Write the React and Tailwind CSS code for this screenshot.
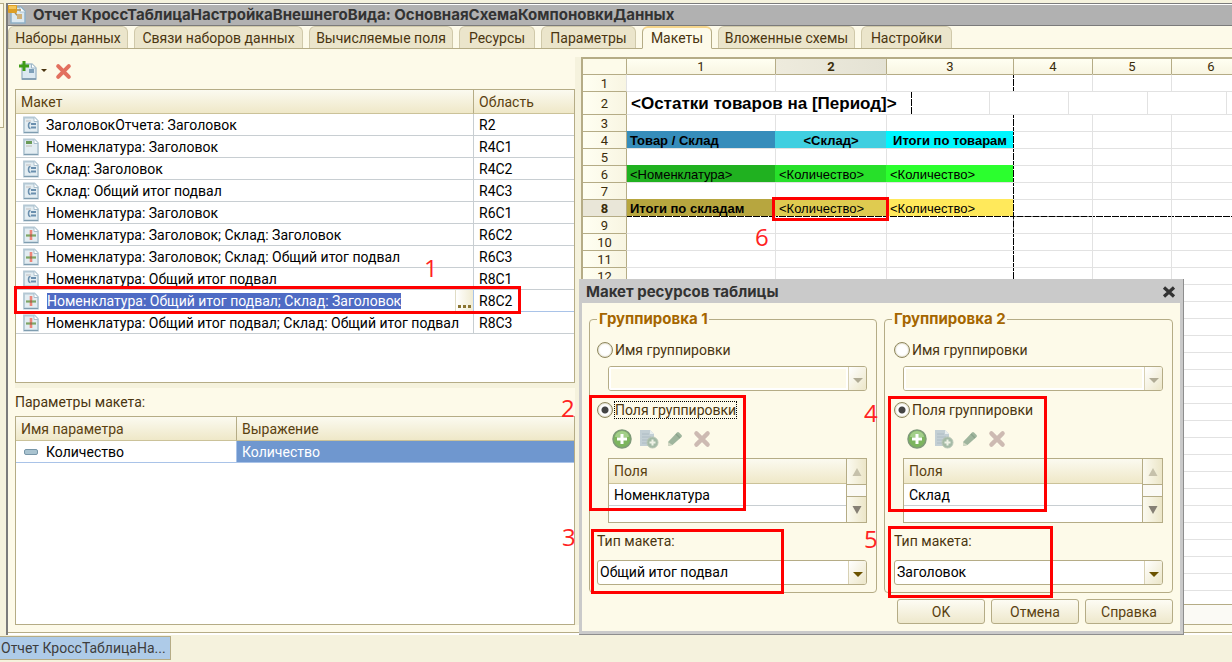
import React from 'react';
import { clsx } from 'clsx';

const tabs = [
  ['Наборы данных', 'w-[120px]'],
  ['Связи наборов данных', 'w-[169px]'],
  ['Вычисляемые поля', 'w-[144px]'],
  ['Ресурсы', 'w-[76px]'],
  ['Параметры', 'w-[95px]'],
  ['Макеты', 'w-[70px]'],
  ['Вложенные схемы', 'w-[137px]'],
  ['Настройки', 'w-[91px]'],
];

const layouts = [
  ['group', 'ЗаголовокОтчета: Заголовок', 'R2'],
  ['header', 'Номенклатура: Заголовок', 'R4C1'],
  ['group', 'Склад: Заголовок', 'R4C2'],
  ['group', 'Склад: Общий итог подвал', 'R4C3'],
  ['group', 'Номенклатура: Заголовок', 'R6C1'],
  ['cross', 'Номенклатура: Заголовок; Склад: Заголовок', 'R6C2'],
  ['cross', 'Номенклатура: Заголовок; Склад: Общий итог подвал', 'R6C3'],
  ['group', 'Номенклатура: Общий итог подвал', 'R8C1'],
  ['cross', 'Номенклатура: Общий итог подвал; Склад: Заголовок', 'R8C2', true],
  ['cross', 'Номенклатура: Общий итог подвал; Склад: Общий итог подвал', 'R8C3'],
];

const headBg = 'bg-linear-to-b from-[#fbfaf0] to-[#efe8c8]';

function PageIcon({ kind }) {
  return (
    <svg width="16" height="18" viewBox="0 0 16 18" className="block shrink-0" aria-hidden="true">
      <path d="M1 1.5h10.5L15 5v11.500H1z" fill="#e3edf2" stroke="#b4c8d4" strokeWidth="1.800" />
      <path d="M11 1.500V5.500h4" fill="#fff" stroke="#a9bfcd" />
      <path d="M1 16.500h14" stroke="#7f9db0" />
      {kind === 'group' && (
        <g fill="none" stroke="#6a8fae">
          <path d="M7.500 6.500q-2 0-2 3t2 3" strokeWidth="1.500" />
          <path d="M8 8h5M8 11.500h5" strokeWidth="2" />
          <path d="M3 5h5" stroke="#d3d6d8" strokeWidth="2" />
        </g>
      )}
      {kind === 'header' && (
        <g>
          <path d="M3 3h6v3H3z" fill="#6b9b58" />
          <path d="M3 8h6" stroke="#d0d4d2" strokeWidth="2" />
        </g>
      )}
      {kind === 'cross' && (
        <g>
          <path d="M8 4v10" stroke="#ee8478" strokeWidth="2.600" />
          <path d="M3 9.500h10" stroke="#7fa565" strokeWidth="2.200" />
          <path d="M7 8.500h2v2H7z" fill="#b5624e" />
        </g>
      )}
    </svg>
  );
}

function WindowIcon() {
  return (
    <svg width="20" height="20" viewBox="0 0 20 20" className="block shrink-0" aria-hidden="true">
      <path d="M3 2h10l4 4v12H3z" fill="#dbe8f0" stroke="#8fb0c6" strokeWidth="1.500" />
      <path d="M12 2v5h5" fill="#fff" stroke="#a9c2d2" />
      <path d="M7 8l4 4M8 5h5" stroke="#a58f62" strokeWidth="1.500" />
      <rect x="9" y="9" width="5" height="5" fill="#d0b27a" />
      <rect x="0" y="0" width="9" height="8" rx="1" fill="#dd9f25" />
      <path d="M1 1h7v3H1z" fill="#f3c65c" />
    </svg>
  );
}

function AddPageIcon() {
  return (
    <svg width="20" height="20" viewBox="0 0 20 20" className="block" aria-hidden="true">
      <path d="M3 3h10l4 4v11H3z" fill="#dce9f1" stroke="#a6bdcb" strokeWidth="1.500" />
      <path d="M12.500 3v4h4" fill="#fff" stroke="#9db6c6" />
      <path d="M3 18h14" stroke="#7795aa" strokeWidth="1.500" />
      <rect x="10" y="8" width="5" height="4" fill="#7ea0b9" />
      <path d="M5 0v10M0 5h10" stroke="#3f9c18" strokeWidth="3" />
    </svg>
  );
}

function CrossIcon({ color, size }) {
  return (
    <svg width={size} height={size} viewBox="0 0 16 16" className="block" aria-hidden="true">
      <path d="M3 3l10 10M13 3L3 13" stroke={color} strokeWidth="3.800" strokeLinecap="round" />
    </svg>
  );
}

function PlusCircle() {
  return (
    <svg width="20" height="20" viewBox="0 0 20 20" className="block" aria-hidden="true">
      <circle cx="10" cy="10" r="9" fill="#7cb55e" stroke="#7e9a78" strokeWidth="1.500" />
      <path d="M3 8a7 6 0 0 1 14 0z" fill="#a3cf8a" />
      <path d="M10 5v10M5 10h10" stroke="#fff" strokeWidth="3" />
    </svg>
  );
}

function CopyAddIcon() {
  return (
    <svg width="20" height="20" viewBox="0 0 20 20" className="block" aria-hidden="true">
      <path d="M1 1h10l4 4v12H1z" fill="#c3cfd4" />
      <path d="M11 1v4h4" fill="#e9eeee" />
      <path d="M3 5h7M3 8h9M3 11h6M3 14h5" stroke="#aebcc4" />
      <circle cx="13.500" cy="13.500" r="5.500" fill="#a5bba6" stroke="#b9c6b6" />
      <path d="M13.500 10.500v6M10.500 13.500h6" stroke="#eef2e6" strokeWidth="2" />
    </svg>
  );
}

function PencilIcon() {
  return (
    <svg width="18" height="18" viewBox="0 0 18 18" className="block" aria-hidden="true">
      <path d="M2 12L11 2.500q1-1 2 0l2.500 2.500q1 1 0 2L6.500 15 2 16z" fill="#9fb59d" />
      <path d="M2 12l4.500 3L2 16z" fill="#d3d8c4" />
      <path d="M10 4l4 4" stroke="#8ba38c" strokeWidth="1.500" />
    </svg>
  );
}

function Triangle({ up, color }) {
  return (
    <svg width="10" height="8" viewBox="0 0 10 8" className="block" aria-hidden="true">
      <path d={up ? 'M5 0l4.500 8h-9z' : 'M5 8L.5 0h9z'} fill={color} />
    </svg>
  );
}

function Combo({ id, labelledBy, value, disabled }) {
  return (
    <div className={clsx('flex h-[25px] overflow-hidden rounded-[3px] border border-[#b5ac86]', disabled ? 'bg-[#fdfae9]' : 'bg-white')}>
      <select
        id={id}
        aria-labelledby={labelledBy}
        disabled={disabled}
        className={clsx('min-w-0 flex-1 appearance-none px-[2px] pb-[2px] text-[14px] text-black opacity-100 outline-none', disabled && 'border-2 border-white')}
      >
        <option>{value}</option>
      </select>
      <span className="pointer-events-none flex w-[18px] items-center justify-center border-l border-[#d8d1b4] bg-linear-to-br from-white to-[#ece6c8] pt-[3px]">
        <svg width="10" height="5" viewBox="0 0 10 5" aria-hidden="true">
          <path d="M0 0h10L5 5z" fill={disabled ? '#b0ab95' : '#6b5200'} />
        </svg>
      </span>
    </div>
  );
}

function Group({ n, field, type, focused }) {
  const indent = n === 1 ? 'ml-[11px]' : 'ml-[9px]';
  const iconPad = n === 1 ? 'ml-[15px]' : 'ml-[13px]';
  return (
    <fieldset className={clsx('min-w-0 rounded-[4px] border border-[#b5ac86] pr-[9px] pb-[7px]', n === 1 ? 'w-[288px] pl-[7px]' : 'flex-1 pl-[9px]')}>
      <legend className={clsx("pr-[1px] pl-[2px] font-['Inter','Liberation_Sans',sans-serif] text-[15px] leading-[18px] font-bold text-[#a56600]", n === 2 && '-ml-[2px]')}>Группировка {n}</legend>
      <div className="mt-[13px] flex h-[18px] items-center gap-[2px]">
        <Radio id={`name-${n}`} group={`mode-${n}`} />
        <label id={`name-label-${n}`} htmlFor={`name-${n}`}>Имя группировки</label>
      </div>
      <div className={clsx('mt-[7px]', indent)}>
        <Combo labelledBy={`name-label-${n}`} value="" disabled />
      </div>
      <div className="mt-[10px] flex h-[18px] items-center gap-[1px]">
        <Radio id={`fields-${n}`} group={`mode-${n}`} checked />
        <label htmlFor={`fields-${n}`} className={clsx('border', focused ? 'border-dotted border-black' : 'border-transparent')}>Поля группировки</label>
      </div>
      <div className={clsx('mt-[10px] flex h-5 items-center gap-[7px]', iconPad)}>
        <button type="button"><PlusCircle /></button>
        <button type="button"><CopyAddIcon /></button>
        <button type="button"><PencilIcon /></button>
        <button type="button" className="ml-[2px]"><CrossIcon color="#cdbab2" size={18} /></button>
      </div>
      <div className={clsx('mt-[9px] flex h-[65px] border border-[#b5ac86] bg-white', indent)}>
        <div className="flex-1 overflow-hidden">
          <table className="w-full border-separate border-spacing-0">
            <thead>
              <tr>
                <th className={clsx('h-[25px] border-b border-[#cbc299] px-[5px] text-left font-normal text-[#5a4110]', headBg)}>Поля</th>
              </tr>
            </thead>
            <tbody>
              <tr>
                <td className="h-[22px] border-b border-[#c8ced2] px-[5px] text-black">{field}</td>
              </tr>
            </tbody>
          </table>
        </div>
        <div className="flex w-[20px] flex-col border-l border-[#b5ac86] bg-[#fbfaf5]">
          <button type="button" className="flex h-[26px] items-center justify-center border-b border-[#b5ac86] bg-linear-to-r from-[#fbfaf0] to-[#ece6c8]"><Triangle up color="#c6c1ab" /></button>
          <span className="flex-1" />
          <button type="button" className="flex h-[26px] items-center justify-center border-t border-[#b5ac86] bg-linear-to-r from-[#fbfaf0] to-[#ece6c8]"><Triangle color="#857f74" /></button>
        </div>
      </div>
      <label htmlFor={`type-${n}`} className="mt-[9px] block leading-[18px]">Тип макета:</label>
      <div className="mt-[10px]"><Combo id={`type-${n}`} value={type} /></div>
    </fieldset>
  );
}

function Radio({ id, group, checked }) {
  return (
    <input
      id={id}
      type="radio"
      name={group}
      defaultChecked={checked}
      className="m-0 size-4 shrink-0 appearance-none rounded-full border border-[#8f875c] bg-white shadow-[inset_0_0_2px_#b5ac86] checked:bg-[radial-gradient(circle,#444_3px,#fff_4px)]"
    />
  );
}

const vDash = '[background:linear-gradient(#000_7px,transparent_7px)_left/1px_8px_repeat-y]';
const hDash = '[background:linear-gradient(to_right,#000_7px,transparent_7px)_top/8px_1px_repeat-x]';
const bothDash = '[background:linear-gradient(to_right,#000_7px,transparent_7px)_top/8px_1px_repeat-x,linear-gradient(#000_7px,transparent_7px)_left/1px_8px_repeat-y]';
const lastLabelledRow = 12;
const sheetRows = Array.from({ length: 31 }, (_, i) => i + 1);

const filled = {
  4: [
    ['Товар / Склад', 'bg-[#368dbb] border-[#368dbb] font-bold'],
    ['<Склад>', 'bg-[#40cfe0] border-[#40cfe0] font-bold text-center'],
    ['Итоги по товарам', 'bg-[#00f6ff] border-[#00f6ff] font-bold text-center'],
  ],
  6: [
    ['<Номенклатура>', 'bg-[#20b120] border-[#20b120]'],
    ['<Количество>', 'bg-[#27e02a] border-[#27e02a]'],
    ['<Количество>', 'bg-[#2bff2e] border-[#2bff2e]'],
  ],
  8: [
    ['Итоги по складам', 'bg-[#b7a63f] border-[#b7a63f] font-bold'],
    ['<Количество>', 'bg-[#dfcb50] border-[#dfcb50]'],
    ['<Количество>', 'bg-[#ffe95b] border-[#ffe95b]'],
  ],
};

function Sheet() {
  return (
    <div className="flex min-w-0 flex-1 flex-col border-t-2 border-l-2 border-[#b5ac86] bg-white">
      <div className="min-h-0 flex-1 overflow-hidden">
        <table className="w-[667px] table-fixed border-separate border-spacing-0 text-[13px] leading-[15px] text-[#3a2c0b]">
          <colgroup>
            <col className="w-[43px]" />
            <col className="w-[149px]" />
            <col className="w-[111px]" />
            <col className="w-[127px]" />
            <col className="w-[79px]" />
            <col className="w-[79px]" />
            <col className="w-[79px]" />
          </colgroup>
          <thead>
            <tr>
              <th className="h-[15px] bg-[#fdfbea] p-0" />
              {[1, 2, 3, 4, 5, 6].map((c) => (
                <th key={c} className={clsx('h-[15px] border-l border-[#b5ac86] p-0', c === 2 ? 'bg-linear-to-r from-[#eeebdd] to-[#e4e2d4] font-bold' : 'bg-linear-to-b from-[#fffff2] to-[#f8f5e2] font-normal')}>{c}</th>
              ))}
            </tr>
          </thead>
          <tbody>
            {sheetRows.map((r) => (
              <tr key={r}>
                <th className={clsx('border-t border-[#b5ac86] p-0', r === 2 ? 'h-[23px]' : 'h-[17px]', r === 8 ? 'bg-[#e9e6d8] font-bold' : 'bg-linear-to-r from-[#fffff2] to-[#f8f5e2] font-normal')}>{r <= lastLabelledRow && r}</th>
                {r === 2 ? (
                  <td colSpan={6} className="border-t border-l border-t-[#e2e2e2] border-l-[#b5ac86] p-0">
                    <div className="flex h-[22px]">
                      <span className="w-[284px] pl-1 font-['Liberation_Sans',sans-serif] text-[17px] leading-[24px] font-bold whitespace-nowrap text-black">{'<Остатки товаров на [Период]>'}</span>
                      <span className={clsx('w-[79px]', vDash)} />
                      <span className="w-[79px] border-l border-[#e2e2e2]" />
                      <span className="w-[79px] border-l border-[#e2e2e2]" />
                      <span className="w-[79px] border-l border-[#e2e2e2]" />
                      <span className="w-[24px] border-l border-[#e2e2e2]" />
                    </div>
                  </td>
                ) : (
                  [0, 1, 2, 3, 4, 5].map((c) => {
                    const cell = filled[r] && filled[r][c];
                    return (
                      <td
                        key={c}
                        className={clsx(
                          "overflow-hidden p-0 font-['Liberation_Sans',sans-serif] whitespace-nowrap text-black",
                          r === 4 && c > 0 ? 'pl-0' : 'pl-[3px]',
                          cell && cell[1],
                          r === 9 ? (c === 3 ? bothDash : clsx(hDash, 'border-l border-[#e2e2e2]')) : clsx('border-t', c === 3 ? vDash : 'border-l', !cell && (r === 1 ? 'border-t-[#b5ac86] border-l-[#e2e2e2]' : 'border-[#e2e2e2]')),
                          c === 0 && 'border-l-[#b5ac86]',
                        )}
                      >
                        {cell && cell[0]}
                      </td>
                    );
                  })
                )}
              </tr>
            ))}
          </tbody>
        </table>
      </div>
      <div className="h-[21px] shrink-0 border-y border-[#b5ac86] bg-[#fbfaf5]" />
    </div>
  );
}

function LayoutTable() {
  return (
    <div className="h-[294px] shrink-0 overflow-hidden border border-[#b5ac86] bg-white">
      <table className="w-full table-fixed border-separate border-spacing-0 text-black">
        <colgroup>
          <col />
          <col className="w-[101px]" />
        </colgroup>
        <thead>
          <tr className="text-left text-[#5a4110]">
            <th className={clsx('h-[24px] border-b border-[#cbc299] p-0 px-[5px] font-normal', headBg)}>Макет</th>
            <th className={clsx('h-[24px] border-b border-l border-[#b5ac86] border-b-[#cbc299] p-0 px-[5px] font-normal', headBg)}>Область</th>
          </tr>
        </thead>
        <tbody>
          {layouts.map(([kind, name, area, editing], i) => (
            <tr key={i}>
              <td className={clsx('h-[22px] border-b p-0 pl-[7px]', editing ? 'border-[#a9c3e8]' : 'border-[#c8ced2]')}>
                <div className="flex h-[21px] items-center">
                  <PageIcon kind={kind} />
                  {editing ? (
                    <>
                      <input aria-labelledby="selected-area" readOnly value={name} className="ml-2 h-4 bg-[#4f6bc4] p-0 text-[14px] leading-4 text-white outline-none [field-sizing:content]" />
                      <button type="button" className="ml-auto flex h-[21px] w-[18px] items-end justify-center gap-[2px] border-l border-[#e0dcc4] bg-linear-to-r from-white to-[#f0ebd2] pb-[3px]">
                        <i className="size-[3px] bg-[#8a7430]" />
                        <i className="size-[3px] bg-[#8a7430]" />
                        <i className="size-[3px] bg-[#8a7430]" />
                      </button>
                    </>
                  ) : (
                    <span className="ml-[7px] whitespace-nowrap">{name}</span>
                  )}
                </div>
              </td>
              <td id={editing ? 'selected-area' : undefined} className={clsx('h-[22px] border-b border-l p-0 px-[5px]', editing ? 'border-[#a9c3e8]' : 'border-[#c8ced2]')}>{area}</td>
            </tr>
          ))}
        </tbody>
      </table>
    </div>
  );
}

function Dialog() {
  return (
    <section role="dialog" aria-labelledby="dialog-title" className="absolute top-[279px] left-[579px] w-[605px] border-r border-b border-[#8e8e8e]">
      <div className="border-[3px] border-t-0 border-[#cacaca] bg-[#fdfae9]">
        <header className="flex h-6 items-center justify-between bg-[#cacaca] pr-[3px] pl-[4px]">
          <h2 id="dialog-title" className="pt-[2px] font-['Inter','Liberation_Sans',sans-serif] text-[15px] leading-5 font-bold text-[#333]">Макет ресурсов таблицы</h2>
          <button type="button" className="pt-[2px]">
            <svg width="16" height="14" viewBox="0 0 16 14" aria-hidden="true"><path d="M3 2.500l10 9M13 2.500l-10 9" stroke="#333" strokeWidth="3.200" /></svg>
          </button>
        </header>
        <form className="px-[7px] pt-[7px] pb-[7px]" onSubmit={(e) => e.preventDefault()}>
          <div className="flex gap-[7px]">
            <Group n={1} field="Номенклатура" type="Общий итог подвал" focused />
            <Group n={2} field="Склад" type="Заголовок" />
          </div>
          <div className="mt-[6px] flex justify-end gap-[6px]">
            {['OK', 'Отмена', 'Справка'].map((t) => (
              <button key={t} type="button" className="h-[25px] w-[88px] rounded-[3px] border border-[#b5ac86] bg-linear-to-b from-[#fdfcf4] to-[#eee8cc] text-[#5a4110]">{t}</button>
            ))}
          </div>
        </form>
      </div>
    </section>
  );
}

const frames = [
  'left-[14px] top-[286px] w-[507px] h-[28px]',
  'left-[589px] top-[395px] w-[157px] h-[116px]',
  'left-[591px] top-[529px] w-[193px] h-[65px]',
  'left-[888px] top-[396px] w-[159px] h-[116px]',
  'left-[888px] top-[526px] w-[165px] h-[72px]',
  'left-[772px] top-[197px] w-[117px] h-[24px]',
];

const marks = [
  ['1', 'left-[424px] top-[253px]'],
  ['2', 'left-[561px] top-[393px]'],
  ['3', 'left-[562px] top-[522px]'],
  ['4', 'left-[864px] top-[398px]'],
  ['5', 'left-[864px] top-[524px]'],
  ['6', 'left-[755px] top-[222px]'],
];

export default function App() {
  return (
    <div className="relative flex h-screen flex-col overflow-hidden bg-[#f5f2dd] pt-[3px] font-['Roboto','Liberation_Sans',sans-serif] text-[14px] leading-4 text-[#4a3510]">
      <div className="flex min-h-0 flex-1">
        <aside className="h-[125px] w-1 shrink-0 border-t border-r border-b border-[#b5ac86] bg-[#fdfae9]" />
        <main className="ml-[2px] flex min-w-0 flex-1 flex-col border-t border-l-2 border-[#7b7b7b]">
          <header className="flex h-[22px] shrink-0 items-center gap-[5px] border-t border-b border-t-white border-b-[#7b7b7b] bg-[#b1b1b1]">
            <WindowIcon />
            <h1 className="font-['Inter','Liberation_Sans',sans-serif] text-[15px] leading-5 font-bold text-[#333]">Отчет КроссТаблицаНастройкаВнешнегоВида: ОсновнаяСхемаКомпоновкиДанных</h1>
          </header>
          <nav className="flex h-[23px] shrink-0 gap-[6px] border-b border-[#b5ac86] bg-[#fdfae9]">
            {tabs.map(([label, width]) => {
              const on = label === 'Макеты';
              return (
                <button
                  key={label}
                  type="button"
                  className={clsx('shrink-0 rounded-t-[6px] border whitespace-nowrap', width, on ? '-mb-px border-[#b5ac86] border-t-2 border-t-[#f5d58b] border-b-[#fdfae9] bg-[#fdfae9]' : 'border-[#d0c9aa] border-b-0 bg-[#ebe5cb]')}
                >
                  {label}
                </button>
              );
            })}
          </nav>
          <div className="flex min-h-0 flex-1 border-b border-[#b5ac86] bg-[#fdfae9] pb-[7px]">
            <div className="ml-[7px] flex w-[560px] shrink-0 flex-col">
              <div className="flex h-[40px] shrink-0 items-center pt-[4px] pl-1">
                <button type="button"><AddPageIcon /></button>
                <svg width="6" height="4" viewBox="0 0 6 4" className="ml-[2px]" aria-hidden="true"><path d="M0 0h6L3 3z" fill="#4a3510" /></svg>
                <button type="button" className="ml-[8px]"><CrossIcon color="#e2705f" size={17} /></button>
              </div>
              <LayoutTable />
              <div className="h-[5px] shrink-0 bg-[#f5f2dd]" />
              <h2 id="params" className="mt-[6px] mb-[6px] h-4 shrink-0 text-[14px] leading-4">Параметры макета:</h2>
              <div className="min-h-0 flex-1 overflow-hidden border border-[#b5ac86] bg-white">
                <table aria-labelledby="params" className="w-full table-fixed border-separate border-spacing-0">
                  <colgroup>
                    <col className="w-[220px]" />
                    <col />
                  </colgroup>
                  <thead>
                    <tr className="text-left text-[#5a4110]">
                      <th className={clsx('h-[24px] border-b border-[#cbc299] p-0 px-[5px] font-normal', headBg)}>Имя параметра</th>
                      <th className={clsx('h-[24px] border-b border-l border-[#b5ac86] border-b-[#cbc299] p-0 px-[5px] font-normal', headBg)}>Выражение</th>
                    </tr>
                  </thead>
                  <tbody>
                    <tr>
                      <td className="h-[22px] border-b border-[#a9c3e8] p-0 pl-2 text-black">
                        <div className="flex items-center gap-2">
                          <svg width="14" height="6" viewBox="0 0 14 6" aria-hidden="true"><rect x=".5" y=".5" width="13" height="5" rx="1.500" fill="#a9c3d0" stroke="#7896a8" /></svg>
                          Количество
                        </div>
                      </td>
                      <td className="h-[22px] border-b border-l border-[#a9c3e8] bg-[#6f97cf] p-0 px-[5px] text-white">Количество</td>
                    </tr>
                  </tbody>
                </table>
              </div>
            </div>
            <div className="mt-2 w-[6px] shrink-0 bg-[#f5f2dd]" />
            <div className="flex min-w-0 flex-1 pt-2"><Sheet /></div>
          </div>
          <div className="h-[2px] shrink-0 bg-white" />
        </main>
      </div>
      <footer className="flex h-[27px] shrink-0 items-start pt-px">
        <button type="button" className="h-6 w-[171px] border border-l-0 border-[#b5ac86] bg-[#aecbe8] pl-[1px] text-left whitespace-nowrap text-[#3d3d3d]">Отчет КроссТаблицаНа...</button>
      </footer>
      <Dialog />
      {frames.map((f) => (
        <div key={f} className={clsx('pointer-events-none absolute border-[3px] border-[#ff0000]', f)} />
      ))}
      {marks.map(([t, p]) => (
        <span key={t} className={clsx("pointer-events-none absolute font-['Open_Sans',sans-serif] text-[24px] leading-[30px] text-[#f22]", p)}>{t}</span>
      ))}
    </div>
  );
}
